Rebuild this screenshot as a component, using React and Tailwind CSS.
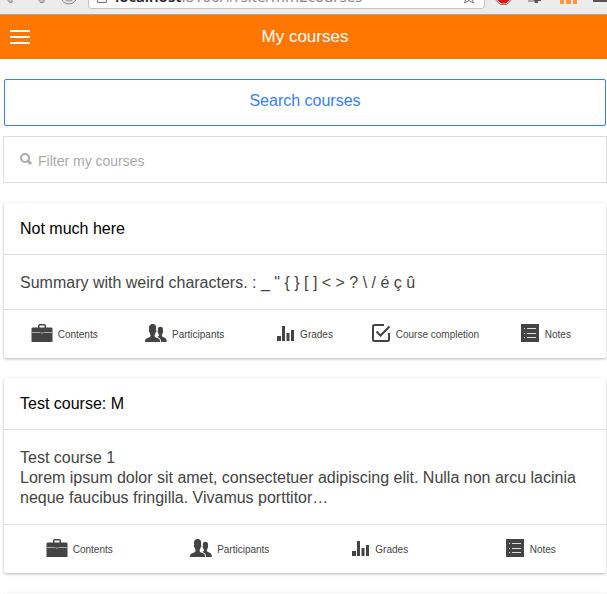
const icons = {
    contents: (
        <svg viewBox="0 0 22 18" className="w-[22px] h-[18px]" fill="currentColor">
            <path d="M7 4V1.600Q7.200 0 8.800 0h4.400Q14.800 0 15 1.600V4h-1.500V1.500h-5V4z" />
            <path d="M1.500 3.500h19Q21.500 3.500 21.500 5v12.500q0 .5-.5.500H1q-.5 0-.5-.5V5q0-1.500 1-1.500z" />
            <path fill="#a8a8a8" d="M.5 8h9v1h-9zM12.500 8h9v1h-9zM10.500 8h1v2h-1z" />
        </svg>
    ),
    participants: (
        <svg viewBox="0 0 22 18" className="w-[22px] h-[18px]" fill="currentColor">
            <path d="M0 18c0-2.300.5-3.200 2-3.800 2.300-.8 3.600-1.100 3.600-2.700 0-.9-.8-1.300-1-3-.4-.1-.8-.7-.8-1.700 0-.6.2-.8.4-.9-.3-1.600-.4-3 .3-4.300C5.100.5 6.200 0 7.700 0c2.800 0 3.500 1.900 3.500 3.500 0 1-.2 1.700-.2 2.400.2.100.4.400.4.900 0 1-.4 1.600-.8 1.700-.2 1.700-1 2.100-1 3 0 1.600 1.400 1.900 3.400 2.700 1.500.6 2.100 1.500 2.100 3.800z" />
            <path d="M16.100 18c0-2.600-.7-3.800-2.700-4.600l-1.200-.5c1-.4 1.900-.7 1.900-1.600 0-.8-.7-1-.9-2.400-.3-.2-.6-.6-.6-1.400 0-.5.200-.6.300-.7-.4-2.400.5-4 2.500-4 2.200 0 2.900 1.600 2.500 4 .2.100.3.300.3.700 0 .8-.3 1.200-.6 1.400-.2 1.400-.8 1.600-.8 2.400 0 1.400 1.100 1.700 2.900 2.500 1.500.6 2 1.800 2 4.200z" />
        </svg>
    ),
    grades: (
        <svg viewBox="0 0 18 18" className="w-[18px] h-[18px]" fill="currentColor">
            <path d="M0 12h4v5H0zM5 2h3v15H5zM9.500 9h3v8h-3zM14 6h3v11h-3z" />
        </svg>
    ),
    completion: (
        <svg viewBox="0 0 19 18" className="w-[19px] h-[18px]" fill="none" stroke="currentColor" strokeWidth="2">
            <path d="M12 1H2.500Q1 1 1 2.500v13Q1 17 2.500 17h13q1.500 0 1.500-1.500V9" />
            <path d="m4.500 7.500 4 4 9-9" />
        </svg>
    ),
    notes: (
        <svg viewBox="0 0 19 18" className="w-[19px] h-[18px]">
            <path fill="currentColor" d="M0 0h18v18H0z" />
            <path fill="#dddddd" d="M3 4h1v1H3zM6 4h9v1H6zM3 9h1v1H3zM6 9h9v1H6zM3 13h1v1H3zM6 13h9v1H6z" />
        </svg>
    )
};

const contents = { icon: icons.contents, label: "Contents" };
const participants = { icon: icons.participants, label: "Participants" };
const grades = { icon: icons.grades, label: "Grades" };
const completion = { icon: icons.completion, label: "Course completion" };
const notes = { icon: icons.notes, label: "Notes" };

const courses = [
    {
        name: "Not much here",
        summary: ["Summary with weird characters. : _ \" { } [ ] < > ? \\ / é ç û"],
        actions: [contents, participants, grades, completion, notes]
    },
    {
        name: "Test course: M",
        summary: [
            "Test course 1",
            "Lorem ipsum dolor sit amet, consectetuer adipiscing elit. Nulla non arcu lacinia neque faucibus fringilla. Vivamus porttitor…"
        ],
        actions: [contents, participants, grades, notes]
    }
];

// Bottom edge of the browser toolbar
const BrowserBar = () => (
    <div className="flex h-[15px] overflow-hidden bg-[#ececec] border-b border-[#a8a8a8]">
        <svg viewBox="0 0 88 14" className="w-[88px] h-[14px] shrink-0" fill="none" stroke="#888888">
            <path fill="#c8c8c8" d="m6-2 4 5 2-1V-2M37-2l4 5 3-1v-4" />
            <circle cx="69" cy="-4" r="8" fill="#e4e4e4" />
            <circle cx="69" cy="-4" r="5" fill="#f4f4f4" />
        </svg>
        <div className="flex items-end grow h-[9px] px-2 bg-white border-x border-b border-[#c4c4c4] rounded-b-sm">
            <svg viewBox="0 0 10 12" className="w-[10px] h-3 mb-[5px] mr-2 shrink-0" fill="#f4f4f4" stroke="#777777">
                <path d="M.5.500h9v11h-9z" />
            </svg>
            <span className="grow mb-1 font-['Noto_Sans',sans-serif] text-[15px] leading-4 text-[#888888] whitespace-nowrap"><span className="font-semibold text-[#222222]">localhost</span>:8100/#/site/mm2courses</span>
            <svg viewBox="0 0 14 14" className="w-[14px] h-[14px] mb-1 shrink-0" fill="none" stroke="#777777">
                <path d="m7 1 2 4 4.500.5-3.500 3 1.500 4.500L7 10.500 2.500 13 4 8.500.500 5.500 5 5z" />
            </svg>
        </div>
        <svg viewBox="0 0 122 14" className="w-[122px] h-[14px] shrink-0">
            <path fill="#ffffff" stroke="#777777" d="M10.500-2v2l5 4.500h6l5-4.500v-2z" />
            <path fill="#d51a1a" d="M12-2v2l4 3.500h5L25 0v-2z" />
            <path fill="#aaaaaa" d="M43 0h6v2h-6z" />
            <path fill="#555555" d="M49 0h7v1h-3v2h-3z" />
            <path fill="#ff9a3c" d="M75 0h4v4h-4zM81 0h5v4h-5zM88 0h4v4h-4z" />
            <path fill="#555555" d="M108 0h14v2h-14z" />
        </svg>
    </div>
);

const CourseCard = ({ course }) => (
    <section className="bg-white rounded-xs text-[#444444] shadow-[0_1px_3px_rgba(0,0,0,0.3)]">
        <h2 className="px-4 pt-4 pb-[15px] text-base leading-5 text-black border-b border-[#dddddd]">{course.name}</h2>
        <div className="px-4 pt-[18px] pb-4 text-base leading-5 border-b border-[#dddddd]">
            {
                course.summary.map((line, index) => (
                    <p key={index}>{line}</p>
                ))
            }
        </div>
        <div className="flex h-12 pb-[2px]">
            {
                course.actions.map((action) => (
                    <button key={action.label} className="flex flex-1 items-center justify-center gap-[5px] text-[10px] leading-4 whitespace-nowrap">
                        {action.icon}
                        <span className="pt-1">{action.label}</span>
                    </button>
                ))
            }
        </div>
    </section>
);

export default function App() {
    return (
        <div className="h-screen overflow-hidden bg-white font-['Liberation_Sans',Arial,sans-serif]">
            <BrowserBar />
            <header className="grid grid-cols-[40px_1fr_37px] items-center h-11 bg-[#ff7700] text-white">
                <button aria-label="Menu" className="flex justify-center">
                    <svg viewBox="0 0 20 14" className="w-5 h-[14px]" fill="currentColor">
                        <path d="M0 0h20v2H0zM0 6h20v2H0zM0 12h20v2H0z" />
                    </svg>
                </button>
                <h1 className="text-center text-[17px] leading-5">My courses</h1>
            </header>
            <main className="flex flex-col pl-1 pr-px pt-5">
                <button className="h-[47px] pb-1 text-base text-[#387ef5] border border-[#387ef5] rounded-xs">Search courses</button>
                <label className="flex items-center h-[47px] mt-[10px] mb-5 -mx-px px-4 pt-[2px] border border-[#dddddd] text-[#aaaaaa]">
                    <svg viewBox="0 0 12 12" className="w-3 h-3 mr-[6px] mb-1 shrink-0" fill="none" stroke="currentColor" strokeWidth="2">
                        <circle cx="5" cy="5" r="4" />
                        <path strokeWidth="3" d="m8 8 3 3" />
                    </svg>
                    <input type="text" aria-label="Filter my courses" placeholder="Filter my courses" className="grow text-sm outline-none placeholder:text-[#aaaaaa]" />
                </label>
                <div className="flex flex-col gap-5">
                    {
                        courses.map((course) => (
                            <CourseCard key={course.name} course={course} />
                        ))
                    }
                    <section className="h-12 bg-white rounded-xs shadow-[0_1px_3px_rgba(0,0,0,0.3)]"></section>
                </div>
            </main>
        </div>
    );
}
